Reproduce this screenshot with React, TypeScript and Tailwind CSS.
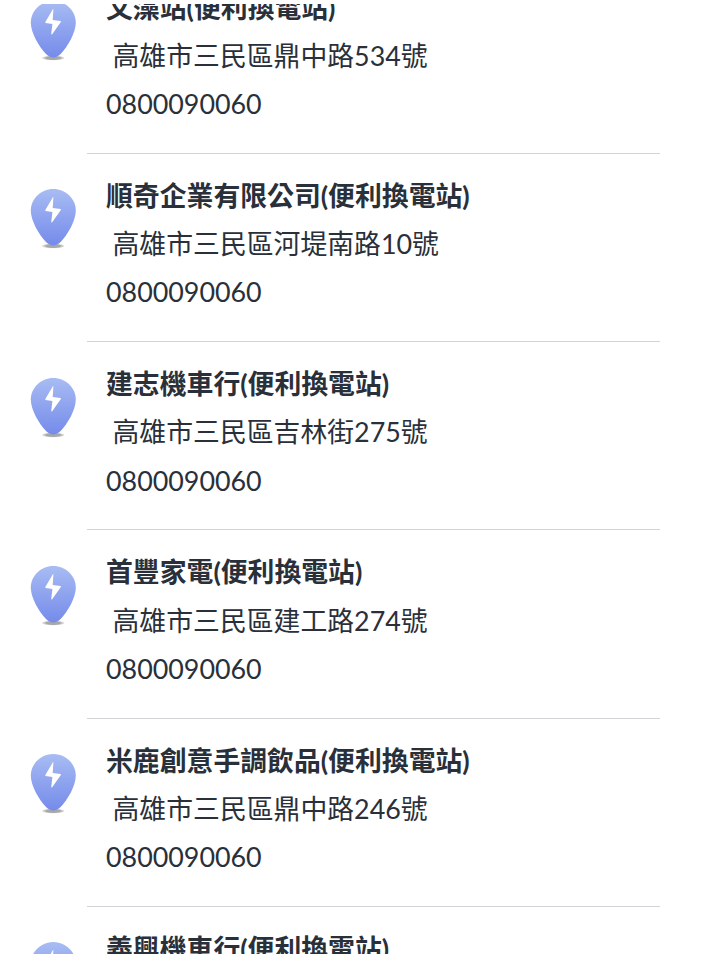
import React from "react";

type Station = { name: string; address: string; phone: string };

const stations: Station[] = [
  { name: "文藻站(便利換電站)", address: "高雄市三民區鼎中路534號", phone: "0800090060" },
  { name: "順奇企業有限公司(便利換電站)", address: "高雄市三民區河堤南路10號", phone: "0800090060" },
  { name: "建志機車行(便利換電站)", address: "高雄市三民區吉林街275號", phone: "0800090060" },
  { name: "首豐家電(便利換電站)", address: "高雄市三民區建工路274號", phone: "0800090060" },
  { name: "米鹿創意手調飲品(便利換電站)", address: "高雄市三民區鼎中路246號", phone: "0800090060" },
  { name: "義興機車行(便利換電站)", address: "", phone: "" },
];

function Pin() {
  return (
    <svg width="50" height="64" viewBox="0 0 50 64">
      <defs>
        <linearGradient id="pin" x1="0" y1="0" x2="0" y2="1">
          <stop offset="0" stopColor="#a8bcf3" />
          <stop offset="1" stopColor="#758bea" />
        </linearGradient>
        <radialGradient id="shadow">
          <stop offset="0.6" stopColor="#a8a8a8" />
          <stop offset="1" stopColor="#a8a8a8" stopOpacity="0.15" />
        </radialGradient>
      </defs>
      <ellipse cx="25.2" cy="58" rx="11.5" ry="2.5" fill="url(#shadow)" />
      <path d="M25.3 1C12.7 1 2.8 11 2.8 22.500C2.800 33 11 46.500 18 54C22.500 58.500 28.100 58.500 32.600 54C39.600 46.500 47.800 33 47.800 22.500C47.800 11 37.900 1 25.300 1Z" fill="url(#pin)" />
      <path d="M25 9L17.200 22.300L17.600 23L24.400 24.100L23.200 34.200L24 34.500L33 21.800L32.600 21L24.700 20L25.400 9.300Z" fill="#fff" />
    </svg>
  );
}

export default function App() {
  return (
    <main className="h-[954px] w-[720px] overflow-hidden bg-white pt-1 font-['Lato','Noto_Sans_CJK_TC',sans-serif] text-[26.85px] leading-[48.2px] text-[#29303a]">
      <div className="h-[950px] overflow-hidden">
        <div className="-mt-[38.3px]">
          {stations.map((s) => (
            <section key={s.name} className="flex h-[188.25px]">
              <div className="w-[86.5px] shrink-0 pl-7 pt-[34.3px]"><Pin /></div>
              <div className="w-[573.5px] whitespace-nowrap border-b border-[#d2d4d7] pl-[19.5px] pt-[18px]">
                <h2 className="font-bold">{s.name}</h2>
                <p className="pl-[6.5px]">{s.address}</p>
                <p>{s.phone}</p>
              </div>
            </section>
          ))}
        </div>
      </div>
    </main>
  );
}
